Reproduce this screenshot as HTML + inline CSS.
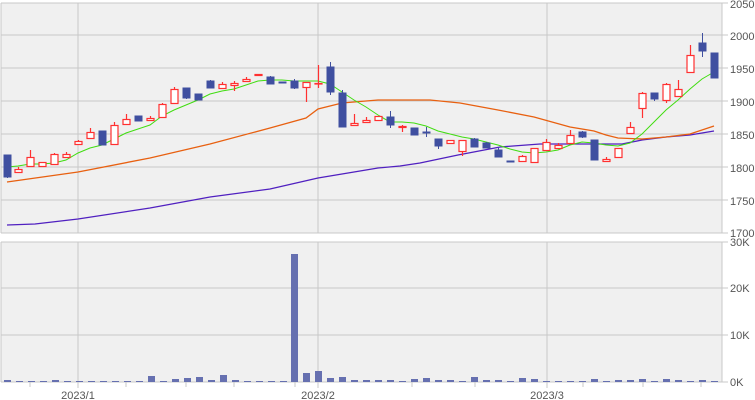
<!DOCTYPE html>
<html><head><meta charset="utf-8"><style>
html,body{margin:0;padding:0;background:#fff;}
svg{display:block;}
text{font-family:"Liberation Sans",sans-serif;font-size:11px;fill:#555;}
</style></head><body>
<svg width="755" height="400" viewBox="0 0 755 400" xmlns="http://www.w3.org/2000/svg">
<rect x="1" y="3" width="721" height="230" fill="#f0f0f0"/>
<rect x="1" y="242" width="721" height="140" fill="#f0f0f0"/>
<g stroke="#c8c8c8" stroke-width="1" fill="none" shape-rendering="crispEdges">
<path d="M1 3H722M1 35H722M1 68H722M1 101H722M1 134H722M1 167H722M1 200H722M1 233H722"/>
<path d="M1 242H722M1 288H722M1 335H722M1 382H722"/>
<path d="M1 3V233M78 3V233M318 3V233M547 3V233M722 3V233"/>
<path d="M1 242V382M78 242V388M318 242V388M547 242V388M722 242V382"/>
<path d="M722 3H728M722 35H728M722 68H728M722 101H728M722 134H728M722 167H728M722 200H728M722 233H728M722 242H728M722 288H728M722 335H728M722 382H728"/>
<path d="M30 382V387M126 382V387M186 382V387M234 382V387M295 382V387M412 382V387M475 382V387M583 382V387M643 382V387M701 382V387"/>
</g>
<g>
<text x="730" y="8">2050</text><text x="730" y="40">2000</text><text x="730" y="73">1950</text><text x="730" y="106">1900</text><text x="730" y="139">1850</text><text x="730" y="172">1800</text><text x="730" y="205">1750</text><text x="730" y="237">1700</text>
<text x="730" y="246">30K</text><text x="730" y="292">20K</text><text x="730" y="339">10K</text><text x="730" y="386">0K</text>
<text x="78" y="399" text-anchor="middle">2023/1</text><text x="318" y="399" text-anchor="middle">2023/2</text><text x="547" y="399" text-anchor="middle">2023/3</text>
</g>
<polyline fill="none" stroke="#5020c0" stroke-width="1.3" points="7,225 35,224 78,219 150,208 210,197 270,189 318,178 378,168 400,166 420,163 458,155 500,147 540,144 582,144 622,144 642,140 666,137 690,135 714,131"/>
<polyline fill="none" stroke="#e86010" stroke-width="1.3" points="7,182 78,172 150,158 210,144 270,128 306,118 318,109 342,103 378,100 430,100 460,103 498,110 534,117 570,127 594,131 606,135 618,138 642,139 666,137 690,134 714,126"/>
<polyline fill="none" stroke="#40dd10" stroke-width="1" points="7,167 18,166 30,164 42,164 54,163 66,160 78,153 90,148 102,145 114,139 126,133 138,129 150,125 162,116 174,110 186,105 198,100 210,94 222,91 234,89 246,85 258,81 270,80 282,80 294,81 306,81 318,81 330,84 342,92 354,100 366,107 378,115 390,122 402,122 414,123 426,126 438,131 450,134 462,137 474,139 486,142 498,145 510,149 522,152 534,153 546,152 558,150 570,145 582,142 594,143 606,145 618,146 630,143 642,134 654,122 666,110 678,100 690,89 702,79 714,72"/>
<g stroke="#3f4fa0" fill="#3f4fa0" shape-rendering="crispEdges">
<path fill="none" d="M7.5 155V178M186.5 88V99M210.5 80V88M270.5 76V84M294.5 79V89M330.5 62V95M342.5 90V127M390.5 111V128M426.5 127V137M438.5 139V149M474.5 138V147M486.5 142V148M498.5 148V157M582.5 131V138M654.5 93V101M702.5 33V57"/>
<rect x="4" y="155" width="7" height="22"/><rect x="99" y="131" width="7" height="14"/><rect x="135" y="116" width="7" height="5"/>
<rect x="183" y="88" width="7" height="10"/><rect x="195" y="94" width="7" height="6"/><rect x="207" y="81" width="7" height="7"/>
<rect x="267" y="77" width="7" height="7"/><rect x="279" y="82" width="7" height="1"/><rect x="291" y="81" width="7" height="7"/>
<rect x="327" y="67" width="7" height="25"/><rect x="339" y="93" width="7" height="34"/><rect x="387" y="117" width="7" height="8"/>
<rect x="411" y="128" width="7" height="7"/><rect x="423" y="132" width="7" height="1"/><rect x="435" y="139" width="7" height="7"/>
<rect x="471" y="139" width="7" height="8"/><rect x="483" y="143" width="7" height="5"/><rect x="495" y="150" width="7" height="7"/>
<rect x="507" y="161" width="7" height="1"/><rect x="579" y="132" width="7" height="5"/><rect x="591" y="140" width="7" height="20"/>
<rect x="651" y="93" width="7" height="6"/><rect x="699" y="43" width="7" height="8"/><rect x="711" y="53" width="7" height="25"/>
</g>
<g stroke="#ff3030" fill="#fff" stroke-width="1.2">
<path fill="none" d="M18.5 167V172M30.5 150V157M54.5 153V154M66.5 152V154M78.5 140V141M90.5 128V132M114.5 122V125M114.5 144V145M126.5 114V119M150.5 116V118M162.5 103V104M174.5 87V89M222.5 82V84M234.5 81V83M234.5 85V91M246.5 77V79M258.5 74V76M306.5 87V102M318.5 65V88M354.5 114V123M366.5 117V120M402.5 125V132M462.5 151V156M522.5 155V156M546.5 139V142M558.5 143V145M570.5 130V135M606.5 157V159M630.5 122V127M642.5 92V93M642.5 108V118M666.5 83V84M666.5 100V103M678.5 80V89M690.5 45V55"/>
<rect x="15" y="169.5" width="7" height="3"/><rect x="27" y="157.5" width="7" height="9"/><rect x="39" y="162.5" width="7" height="4"/>
<rect x="51" y="154.5" width="7" height="10"/><rect x="63" y="154.5" width="7" height="3"/><rect x="75" y="141.5" width="7" height="3"/>
<rect x="87" y="132.5" width="7" height="6"/><rect x="111" y="125.5" width="7" height="19"/><rect x="123" y="119.5" width="7" height="5"/>
<rect x="147" y="118.5" width="7" height="2"/><rect x="159" y="104.5" width="7" height="13"/><rect x="171" y="89.5" width="7" height="14"/>
<rect x="219" y="84.5" width="7" height="4"/><rect x="231" y="83.5" width="7" height="2"/><rect x="243" y="79.5" width="7" height="2"/>
<rect x="255" y="74.5" width="7" height="1"/><rect x="303" y="82.5" width="7" height="5"/><rect x="315" y="83.5" width="7" height="0.5"/>
<rect x="351" y="123.5" width="7" height="2"/><rect x="363" y="120.5" width="7" height="2"/><rect x="375" y="116.5" width="7" height="4"/>
<rect x="399" y="126.5" width="7" height="1"/><rect x="447" y="140.5" width="7" height="3"/><rect x="459" y="140.5" width="7" height="11"/>
<rect x="519" y="156.5" width="7" height="5"/><rect x="531" y="148.5" width="7" height="14"/><rect x="543" y="142.5" width="7" height="8"/>
<rect x="555" y="145.5" width="7" height="3"/><rect x="567" y="135.5" width="7" height="8"/><rect x="603" y="159.5" width="7" height="2"/>
<rect x="615" y="148.5" width="7" height="9"/><rect x="627" y="127.5" width="7" height="6"/><rect x="639" y="93.5" width="7" height="15"/>
<rect x="663" y="84.5" width="7" height="16"/><rect x="675" y="89.5" width="7" height="7"/><rect x="687" y="55.5" width="7" height="17"/>
</g>
<g fill="#6670b0" shape-rendering="crispEdges">
<rect x="4" y="380" width="7" height="2"/><rect x="16" y="381" width="7" height="1"/><rect x="28" y="381" width="7" height="1"/><rect x="40" y="381" width="7" height="1"/><rect x="52" y="380" width="7" height="2"/><rect x="64" y="381" width="7" height="1"/><rect x="76" y="381" width="7" height="1"/><rect x="88" y="381" width="7" height="1"/><rect x="100" y="381" width="7" height="1"/><rect x="112" y="381" width="7" height="1"/><rect x="124" y="381" width="7" height="1"/><rect x="136" y="381" width="7" height="1"/>
<rect x="148" y="376" width="7" height="6"/><rect x="160" y="381" width="7" height="1"/><rect x="172" y="379" width="7" height="3"/><rect x="184" y="378" width="7" height="4"/><rect x="196" y="377" width="7" height="5"/><rect x="208" y="380" width="7" height="2"/><rect x="220" y="375" width="7" height="7"/><rect x="232" y="380" width="7" height="2"/><rect x="244" y="381" width="7" height="1"/><rect x="256" y="381" width="7" height="1"/><rect x="268" y="381" width="7" height="1"/><rect x="280" y="381" width="7" height="1"/>
<rect x="291" y="254" width="7" height="128"/><rect x="303" y="373" width="7" height="9"/><rect x="315" y="371" width="7" height="11"/><rect x="327" y="378" width="7" height="4"/><rect x="339" y="377" width="7" height="5"/><rect x="351" y="380" width="7" height="2"/><rect x="363" y="380" width="7" height="2"/><rect x="375" y="380" width="7" height="2"/><rect x="387" y="380" width="7" height="2"/><rect x="399" y="381" width="7" height="1"/><rect x="411" y="379" width="7" height="3"/><rect x="423" y="378" width="7" height="4"/>
<rect x="435" y="380" width="7" height="2"/><rect x="447" y="380" width="7" height="2"/><rect x="459" y="381" width="7" height="1"/><rect x="471" y="377" width="7" height="5"/><rect x="483" y="380" width="7" height="2"/><rect x="495" y="380" width="7" height="2"/><rect x="507" y="381" width="7" height="1"/><rect x="519" y="378" width="7" height="4"/><rect x="531" y="379" width="7" height="3"/><rect x="543" y="381" width="7" height="1"/><rect x="555" y="381" width="7" height="1"/><rect x="567" y="381" width="7" height="1"/>
<rect x="579" y="381" width="7" height="1"/><rect x="591" y="379" width="7" height="3"/><rect x="603" y="381" width="7" height="1"/><rect x="615" y="380" width="7" height="2"/><rect x="627" y="380" width="7" height="2"/><rect x="639" y="379" width="7" height="3"/><rect x="651" y="381" width="7" height="1"/><rect x="663" y="379" width="7" height="3"/><rect x="675" y="380" width="7" height="2"/><rect x="687" y="381" width="7" height="1"/><rect x="699" y="380" width="7" height="2"/><rect x="711" y="381" width="7" height="1"/>
</g>
</svg>
</body></html>
